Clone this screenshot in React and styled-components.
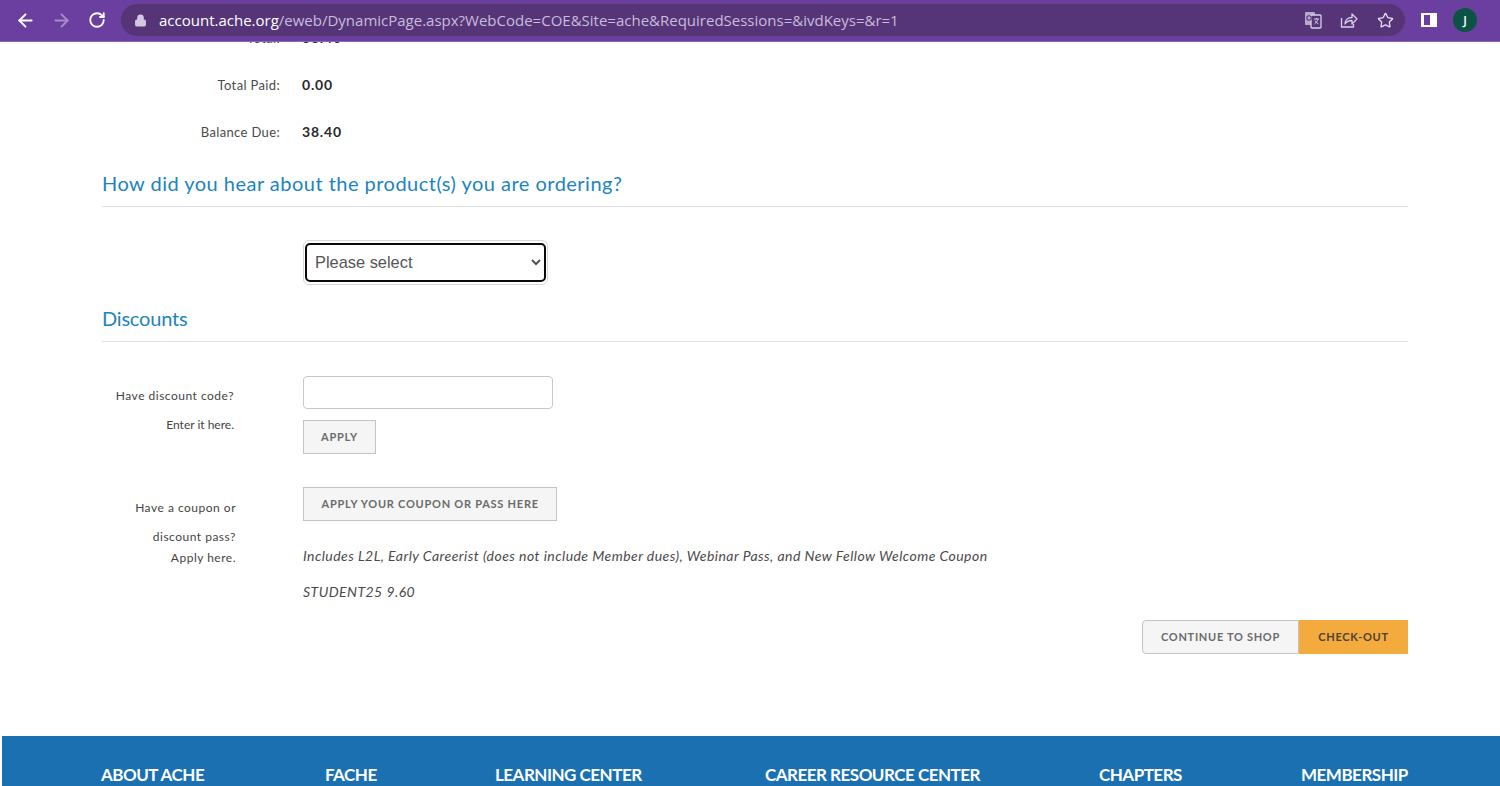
import React from 'react';
import styled, {createGlobalStyle} from 'styled-components';
import {ArrowLeft, ArrowRight, RotateCw, Lock, Star} from 'lucide-react';

const GlobalStyle = createGlobalStyle`
    html, body {
        margin: 0;
        height: 100%;
        overflow: hidden;
        background: #fff;
    }
    * {
        box-sizing: border-box;
    }
`;

const Window = styled.div`
    width: 1500px;
    height: 786px;
    display: flex;
    flex-direction: column;
    overflow: hidden;
    font-family: "Lato", "Liberation Sans", sans-serif;
`;

const Toolbar = styled.div`
    flex: 0 0 42px;
    display: flex;
    align-items: center;
    background: #6b3fa0;
    border-bottom: 1px solid #8a68b6;
    padding: 0 0 1px 13px;
    position: relative;
    z-index: 2;
`;

const NavButton = styled.div`
    width: 24px;
    height: 24px;
    margin-right: 12px;
    display: flex;
    align-items: center;
    justify-content: center;
    color: ${props => (props.$dim ? '#a78bc9' : '#ffffff')};
`;

const Omnibox = styled.div`
    width: 1284px;
    height: 32px;
    border-radius: 16px;
    background: #553578;
    display: flex;
    align-items: center;
    padding: 0 10px 0 13px;
`;

const Url = styled.div`
    flex: 1;
    margin-left: 12px;
    font-family: "Open Sans", "Liberation Sans", sans-serif;
    font-size: 15px;
    color: #c9bcdb;
    white-space: nowrap;

    b {
        font-weight: 400;
        color: #ffffff;
    }
`;

const OmniIcon = styled.div`
    width: 20px;
    height: 20px;
    margin-left: 16px;
    display: flex;
    align-items: center;
    justify-content: center;
    color: ${props => props.$color || '#d9cfe6'};
`;

const SidePanelIcon = styled.div`
    width: 16px;
    height: 14px;
    margin-left: 16px;
    border: 2px solid #fff;
    border-left-width: 3px;
    background: linear-gradient(to right, #6b3fa0 58%, #fff 58%);
`;

const Avatar = styled.div`
    width: 24px;
    height: 24px;
    margin-left: 16px;
    border-radius: 50%;
    background: #0b5345;
    color: #fff;
    font-family: "Open Sans", sans-serif;
    font-size: 12px;
    font-weight: 600;
    display: flex;
    align-items: center;
    justify-content: center;
`;

const Page = styled.div`
    flex: 1;
    overflow: hidden;
`;

const Content = styled.div`
    margin-top: -28px;
    padding: 0 92px 0 102px;
`;

const TotalRow = styled.div`
    display: grid;
    grid-template-columns: 178px 1fr;
    column-gap: 22px;
    height: 47px;
    align-items: center;
`;

const TotalLabel = styled.div`
    text-align: right;
    font-size: 13px;
    letter-spacing: 0.35px;
    color: #4a4a4a;
`;

const TotalValue = styled.div`
    font-size: 14px;
    font-weight: 700;
    letter-spacing: 0.8px;
    color: #2a2a2a;
`;

const SectionTitle = styled.h2`
    margin: ${props => props.$top}px 0 0;
    padding-bottom: ${props => props.$bottom}px;
    border-bottom: 1px solid #e2e2e2;
    font-size: 20px;
    font-weight: 400;
    line-height: 26px;
    letter-spacing: ${props => props.$spacing}px;
    color: #1b84c0;
`;

const SelectRow = styled.div`
    margin: 33px 0 0 201px;
`;

const SelectBox = styled.div`
    width: 245px;
    height: 45px;
    padding: 2px 1px;
    border: 1px solid #d8d8d8;
    border-radius: 6px;
`;

const Select = styled.select`
    width: 100%;
    height: 100%;
    padding: 0 0 1px 4px;
    background: #fff;
    border: 2.5px solid #0a0a0a;
    border-radius: 5px;
    font-family: "Liberation Sans", Arial, sans-serif;
    font-size: 16.4px;
    color: #555;
    outline: none;
`;

const DiscountRow = styled.div`
    display: grid;
    grid-template-columns: 134px 1fr;
    column-gap: 67px;
    margin-top: ${props => props.$top}px;
`;

const SideNote = styled.div`
    text-align: right;
    font-size: 12px;
    letter-spacing: 0.5px;
    color: #444;
    padding-top: ${props => props.$top}px;
    padding-right: ${props => props.$right || 0}px;
`;

const NoteLine = styled.div`
    height: ${props => props.$h}px;
    line-height: ${props => props.$h}px;
    ${props => props.$tight && 'letter-spacing: 0;'}
`;

const TextBox = styled.input`
    display: block;
    width: 250px;
    height: 33px;
    border: 1px solid #c8c8c8;
    border-radius: 4px;
    background: #fff;
`;

const GreyButton = styled.button`
    display: block;
    height: 34px;
    padding: 0 ${props => props.$pad}px 2px;
    margin-top: ${props => props.$top || 0}px;
    background: #f5f5f5;
    border: 1px solid #c4c4c4;
    border-radius: 0;
    font-family: "Lato", sans-serif;
    font-size: 11px;
    font-weight: 700;
    letter-spacing: 0.75px;
    color: #6b6b6b;
    white-space: nowrap;
`;

const Note = styled.div`
    font-size: 14px;
    font-style: italic;
    letter-spacing: 0.45px;
    color: #4a4a4a;
    margin-top: ${props => props.$top}px;
`;

const Actions = styled.div`
    display: flex;
    justify-content: flex-end;
    margin-top: 20px;
`;

const ContinueButton = styled.button`
    width: 157px;
    height: 34px;
    padding: 0 0 2px;
    background: #f5f5f5;
    border: 1px solid #c4c4c4;
    border-radius: 4px 0 0 4px;
    font-family: "Lato", sans-serif;
    font-size: 11px;
    font-weight: 700;
    letter-spacing: 0.7px;
    color: #6b6b6b;
`;

const CheckoutButton = styled.button`
    width: 109px;
    height: 34px;
    padding: 0 0 2px;
    background: #f4ab3d;
    border: none;
    font-family: "Lato", sans-serif;
    font-size: 11px;
    font-weight: 700;
    letter-spacing: 0.7px;
    color: #4b4232;
`;

const Footer = styled.div`
    margin: 82px 0 0 2px;
    height: 120px;
    background: #1a70b0;
    display: flex;
    padding-top: 28px;
`;

const FooterHead = styled.div`
    flex: none;
    width: ${props => props.$w}px;
    font-size: 17px;
    font-weight: 700;
    letter-spacing: -0.5px;
    line-height: 22px;
    color: #fff;
    white-space: nowrap;
`;

const footerCols = [
    {name: 'ABOUT ACHE', width: 224},
    {name: 'FACHE', width: 170},
    {name: 'LEARNING CENTER', width: 270},
    {name: 'CAREER RESOURCE CENTER', width: 334},
    {name: 'CHAPTERS', width: 202},
    {name: 'MEMBERSHIP', width: 120},
];

const TranslateIcon = () => (
    <svg width="18" height="18" viewBox="0 0 18 18">
        <rect x="1" y="1" width="10" height="13" rx="1" fill="#b9a9cf" />
        <rect x="7" y="4" width="10" height="13" rx="1" fill="#553578" stroke="#d9cfe6" strokeWidth="1.3" />
        <path d="M10 8h5M12.5 7v1M14 8c-.5 2-2 4-3.5 5M11 9.5c.7 1.4 2 2.8 3.5 3.5" fill="none" stroke="#d9cfe6" strokeWidth="1" />
        <circle cx="5" cy="7" r="2.2" fill="none" stroke="#553578" strokeWidth="1.1" />
    </svg>
);

const ShareIcon = () => (
    <svg width="18" height="18" viewBox="0 0 18 18" fill="none" stroke="#d9cfe6" strokeWidth="1.3">
        <path d="M1.5 7v9h12v-3" />
        <path d="M5 13c0-4 3-6.5 7-6.5V3l5 5-5 5V9.500c-3 0-5.500 1-7 3.500z" strokeLinejoin="round" />
    </svg>
);

export default function App() {
    return (
        <Window>
            <GlobalStyle />
            <Toolbar>
                <NavButton><ArrowLeft size={21} strokeWidth={2.2} /></NavButton>
                <NavButton $dim><ArrowRight size={21} strokeWidth={2.2} /></NavButton>
                <NavButton><RotateCw size={18} strokeWidth={2.4} /></NavButton>
                <Omnibox>
                    <Lock size={13} color="#d4c8e2" fill="#d4c8e2" />
                    <Url><b>account.ache.org</b>/eweb/DynamicPage.aspx?WebCode=COE&amp;Site=ache&amp;RequiredSessions=&amp;ivdKeys=&amp;r=1</Url>
                    <OmniIcon><TranslateIcon /></OmniIcon>
                    <OmniIcon><ShareIcon /></OmniIcon>
                    <OmniIcon $color="#e8e0f0"><Star size={17} strokeWidth={1.8} /></OmniIcon>
                </Omnibox>
                <SidePanelIcon />
                <Avatar>J</Avatar>
            </Toolbar>
            <Page>
                <Content>
                    <TotalRow>
                        <TotalLabel>Total:</TotalLabel>
                        <TotalValue>38.40</TotalValue>
                    </TotalRow>
                    <TotalRow>
                        <TotalLabel>Total Paid:</TotalLabel>
                        <TotalValue>0.00</TotalValue>
                    </TotalRow>
                    <TotalRow>
                        <TotalLabel>Balance Due:</TotalLabel>
                        <TotalValue>38.40</TotalValue>
                    </TotalRow>
                    <SectionTitle $top={15} $bottom={10} $spacing={0.48}>How did you hear about the product(s) you are ordering?</SectionTitle>
                    <SelectRow>
                        <SelectBox>
                            <Select defaultValue="">
                                <option value="">Please select</option>
                            </Select>
                        </SelectBox>
                    </SelectRow>
                    <SectionTitle $top={20} $bottom={10} $spacing={-0.2}>Discounts</SectionTitle>
                    <DiscountRow $top={34}>
                        <SideNote $top={5} $right={2}>
                            <NoteLine $h={29}>Have discount code?</NoteLine>
                            <NoteLine $h={29} $tight>Enter it here.</NoteLine>
                        </SideNote>
                        <div>
                            <TextBox />
                            <GreyButton $top={11} $pad={17}>APPLY</GreyButton>
                        </div>
                    </DiscountRow>
                    <DiscountRow $top={33}>
                        <SideNote $top={6}>
                            <NoteLine $h={29}>Have a coupon or</NoteLine>
                            <NoteLine $h={29}>discount pass?</NoteLine>
                            <NoteLine $h={13}>Apply here.</NoteLine>
                        </SideNote>
                        <div>
                            <GreyButton $pad={17.5}>APPLY YOUR COUPON OR PASS HERE</GreyButton>
                            <Note $top={26}>Includes L2L, Early Careerist (does not include Member dues), Webinar Pass, and New Fellow Welcome Coupon</Note>
                            <Note $top={19}>STUDENT25 9.60</Note>
                        </div>
                    </DiscountRow>
                    <Actions>
                        <ContinueButton>CONTINUE TO SHOP</ContinueButton>
                        <CheckoutButton>CHECK-OUT</CheckoutButton>
                    </Actions>
                </Content>
                <Footer>
                    <FooterHead $w={99} />
                    {footerCols.map(col => (
                        <FooterHead key={col.name} $w={col.width}>{col.name}</FooterHead>
                    ))}
                </Footer>
            </Page>
        </Window>
    );
}
